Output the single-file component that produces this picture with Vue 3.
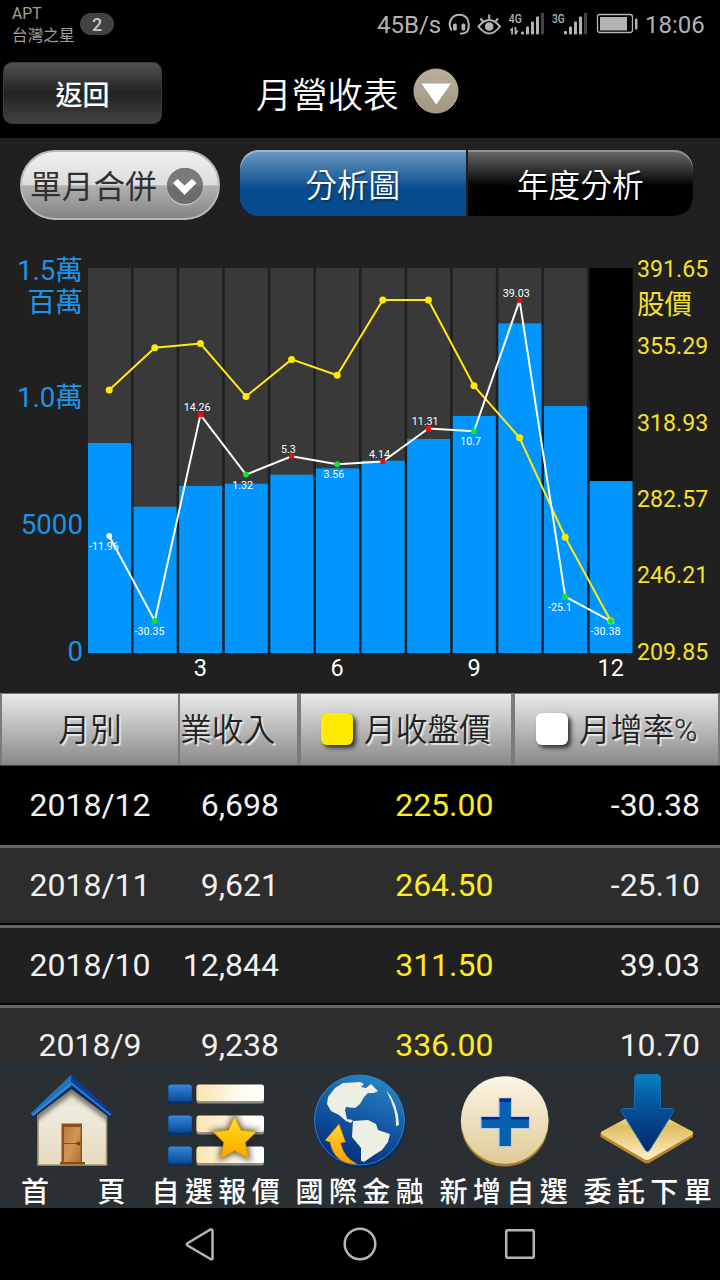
<template>
  <div class="screen">
    <header class="status-bar">
      <div class="carrier">
        <span>APT</span>
        <span>台灣之星</span>
      </div>
      <span class="badge">2</span>
      <span class="speed">45B/s</span>
      <svg class="status-icons" width="194" height="30" viewBox="446 10 194 30">
        <g fill="none" stroke="#b3b3b3" stroke-width="2">
          <path d="M451.500 30.500C449 26 449.500 21 452 18C455.500 13.500 463 13.500 466.800 18C469 21 469.300 27 468 30C467 33 464.500 33.700 460 33.700" />
          <path d="M478.500 26.500Q489.200 13.500 500 26.500Q489.200 40.500 478.500 26.500Z" />
          <path d="M480.500 18.500L483.500 22M489.200 14.500V19M498 18.500L495 22" />
        </g>
        <g fill="#b3b3b3">
          <rect x="453" y="23.500" width="3.800" height="7" rx="1.500" />
          <rect x="461.500" y="23.500" width="3.800" height="7" rx="1.500" />
          <circle cx="489.200" cy="26.500" r="4.300" />
          <path d="M513 27V34.500H511.200V30.500H509.200ZM514.600 27H516.400V30.500H518.400L516.400 34.500H514.600Z" />
          <rect x="521" y="31.500" width="3" height="3" rx="1" />
          <rect x="526" y="26.500" width="3" height="8" rx="1" />
          <rect x="531" y="21.500" width="3" height="13" rx="1" />
          <rect x="536" y="16.500" width="3" height="18" rx="1" />
          <rect x="564" y="31" width="3" height="3.500" rx="1" />
          <rect x="569" y="26.500" width="3" height="8" rx="1" />
          <rect x="574" y="21.500" width="3" height="13" rx="1" />
          <rect x="579" y="16.500" width="3" height="18" rx="1" />
          <rect x="600" y="17" width="27" height="13.500" />
          <rect x="635" y="18.500" width="2.500" height="11" rx="1" />
        </g>
        <rect x="541" y="12.800" width="3" height="21.700" rx="1" fill="#444" />
        <rect x="584" y="12.800" width="3" height="21.700" rx="1" fill="#444" />
        <rect x="597.500" y="14.500" width="35" height="18" rx="2.500" fill="none" stroke="#b3b3b3" stroke-width="1.300" />
        <g class="net">
          <text x="508.800" y="22.800" textLength="13" lengthAdjust="spacingAndGlyphs">4G</text>
          <text x="552" y="22.800" textLength="12.500" lengthAdjust="spacingAndGlyphs">3G</text>
        </g>
      </svg>
      <span class="clock">18:06</span>
    </header>

    <div class="title-bar">
      <button class="back">返回</button>
      <h1>月營收表</h1>
      <svg class="title-arrow" width="46" height="46" viewBox="0 0 46 46">
        <defs>
          <linearGradient id="tan" x1="0" y1="0" x2="0" y2="1">
            <stop offset="0" stop-color="#b9af9d" />
            <stop offset="1" stop-color="#a1967f" />
          </linearGradient>
        </defs>
        <circle cx="23" cy="23" r="22" fill="url(#tan)" stroke="#b5ac9a" stroke-width="1" />
        <path d="M8.500 15.500H38L23.200 36.500Z" fill="#fff" />
      </svg>
    </div>

    <div class="controls">
      <button class="picker">
        <span>單月合併</span>
        <svg width="38" height="40" viewBox="0 0 38 40">
          <circle cx="19" cy="20.300" r="18" fill="#ccc" />
          <circle cx="19" cy="19" r="18" fill="#6c6c6c" />
          <path d="M1 19A18 18 0 0 1 37 19Z" fill="#7a7a7a" />
          <path d="M7 16L11.500 12L18.500 18.500L26 12L30.500 16L18.500 28Z" fill="#fff" />
        </svg>
      </button>
      <div class="tabs">
        <button class="tab active">分析圖</button>
        <button class="tab">年度分析</button>
      </div>
    </div>

    <svg class="chart" width="720" height="473" viewBox="0 220 720 473">
      <g v-for="(m, i) in months" :key="i">
        <rect :x="barX(i)" :y="TOP" width="43" :height="BOTTOM - TOP" :fill="i === 11 ? '#000' : '#393939'" />
        <rect :x="barX(i)" :y="revenueY(m.revenue)" width="43" :height="BOTTOM - revenueY(m.revenue)" fill="#0095ff" />
        <rect v-if="i < 11" :x="barX(i) + 43.600" :y="revenueY(m.revenue)" width="1.400" :height="BOTTOM - revenueY(m.revenue)" fill="#06253c" />
      </g>

      <g class="growth-text">
        <text v-for="(m, i) in months" :key="i" :x="pointX(i) - (m.growth < 0 ? 5.300 : 3.300)" :y="growthY(m.growth) + (m.up ? -3.500 : 14)">{{ m.growth }}</text>
      </g>

      <polyline :points="priceLine" fill="none" stroke="#ffea14" stroke-width="2" />
      <circle v-for="(m, i) in months" :key="'p' + i" :cx="pointX(i)" :cy="priceY(m.price)" r="3.500" fill="#ffea00" />
      <polyline :points="growthLine" fill="none" stroke="#fff" stroke-width="2" />
      <template v-for="(m, i) in months" :key="'g' + i">
        <rect v-if="m.up" :x="pointX(i) - 2.500" :y="growthY(m.growth) - 2.500" width="5" height="5" fill="#e60f0f" />
        <circle v-else :cx="pointX(i)" :cy="growthY(m.growth)" r="2.900" :fill="i === 0 ? '#fff' : '#10e52c'" />
      </template>

      <g class="axis-left">
        <text v-for="t in leftAxis" :key="t.label" x="83" :y="t.y">{{ t.label }}</text>
      </g>
      <g class="axis-right">
        <text v-for="t in rightAxis" :key="t.label" x="637" :y="t.y" :class="{ unit: t.unit }">{{ t.label }}</text>
      </g>
      <g class="axis-bottom">
        <text v-for="n in [3, 6, 9, 12]" :key="n" :x="pointX(n - 1)" y="676">{{ n }}</text>
      </g>
    </svg>

    <div class="thead">
      <div class="th month"><span>月別</span></div>
      <div class="th revenue"><span>業收入</span></div>
      <div class="th price"><i class="swatch yellow" /><span>月收盤價</span></div>
      <div class="th growth"><i class="swatch" /><span>月增率%</span></div>
    </div>
    <div class="rows">
      <div v-for="r in rows" :key="r.month" class="row">
        <span class="month">{{ r.month }}</span>
        <span class="revenue">{{ r.revenue }}</span>
        <span class="price">{{ r.price }}</span>
        <span class="growth">{{ r.growth }}</span>
      </div>
    </div>

    <nav class="bottom-bar">
      <a class="item">
        <svg width="144" height="112" viewBox="0 1063 144 112">
          <defs>
            <linearGradient id="wall" x1="0" y1="0" x2="0" y2="1">
              <stop offset="0" stop-color="#cfc8bb" />
              <stop offset=".3" stop-color="#f0ebe0" />
              <stop offset="1" stop-color="#e6dabd" />
            </linearGradient>
            <linearGradient id="door" x1="0" y1="0" x2="1" y2="1">
              <stop offset="0" stop-color="#bd7c3b" />
              <stop offset=".5" stop-color="#d09655" />
              <stop offset="1" stop-color="#b57227" />
            </linearGradient>
            <filter id="eave" x="-10%" y="-20%" width="120%" height="140%">
              <feGaussianBlur stdDeviation="2" />
            </filter>
            <clipPath id="front">
              <path d="M38 1113L71.500 1084L106.500 1115V1165H38Z" />
            </clipPath>
          </defs>
          <path d="M38 1113L71.500 1084L106.500 1115V1165H38Z" fill="url(#wall)" stroke="#a89a7c" stroke-width="1.500" />
          <g clip-path="url(#front)">
            <path d="M30 1121L71.500 1089L114 1121" fill="none" stroke="#5d564a" stroke-width="8" opacity=".75" filter="url(#eave)" />
          </g>
          <rect x="61.500" y="1123.500" width="20.500" height="39.500" fill="#8e4f1c" />
          <rect x="64" y="1127" width="16.500" height="35" fill="url(#door)" />
          <path d="M64 1143.500H80" stroke="#8e4f1c" />
          <circle cx="78.500" cy="1143.500" r="2" fill="#7d420f" />
          <rect x="60" y="1162" width="25" height="2.500" fill="#8b4b16" />
          <path d="M30.500 1114L33 1118L71.500 1089L110.500 1118L113 1114L71.500 1078Z" fill="#02295f" />
          <path d="M30.500 1113.500L71.500 1074.500V1086L33 1116.500Z" fill="#2472bb" />
          <path d="M113 1113.500L71.500 1074.500V1086L110.500 1116.500Z" fill="#0a3f96" />
          <path d="M33 1115L71.500 1083.500L110.500 1115" fill="none" stroke="#3f8bd4" stroke-width="1.500" />
        </svg>
        <span class="label home">首<b>頁</b></span>
      </a>
      <a class="item">
        <svg width="144" height="112" viewBox="144 1063 144 112">
          <defs>
            <linearGradient id="blue" x1="0" y1="0" x2="0" y2="1">
              <stop offset="0" stop-color="#3488df" />
              <stop offset="1" stop-color="#074a92" />
            </linearGradient>
            <linearGradient id="cream" x1="0" y1="0" x2="1" y2="0">
              <stop offset="0" stop-color="#fae3ad" />
              <stop offset=".65" stop-color="#fffaf0" />
              <stop offset="1" stop-color="#fff" />
            </linearGradient>
            <linearGradient id="star" x1="0" y1="0" x2="0" y2="1">
              <stop offset="0" stop-color="#ffdf3c" />
              <stop offset=".5" stop-color="#fdc403" />
              <stop offset="1" stop-color="#f5a700" />
            </linearGradient>
            <filter id="soft" x="-30%" y="-30%" width="160%" height="160%">
              <feGaussianBlur stdDeviation="3" />
            </filter>
          </defs>
          <g v-for="y in [1084.500, 1115.500, 1146.500]" :key="y">
            <rect x="168.300" :y="y + 1.500" width="23.500" height="18" rx="2.500" fill="#063168" />
            <rect x="168.300" :y="y" width="23.500" height="17" rx="2.500" fill="url(#blue)" />
            <rect x="196.500" :y="y + 2" width="67.500" height="17" rx="2.500" fill="#92908b" />
            <rect x="196.500" :y="y" width="67.500" height="16.500" rx="2.500" fill="url(#cream)" />
          </g>
          <path :d="starPath" fill="#2b1d04" stroke="#2b1d04" stroke-width="4" opacity=".75" filter="url(#soft)" />
          <path :d="starPath" fill="url(#star)" stroke="#e9a500" stroke-width="1" stroke-linejoin="round" />
        </svg>
        <span class="label">自選報價</span>
      </a>
      <a class="item">
        <svg width="144" height="112" viewBox="288 1063 144 112">
          <defs>
            <linearGradient id="sea" x1=".7" y1="0" x2=".3" y2="1">
              <stop offset="0" stop-color="#2588c5" />
              <stop offset=".5" stop-color="#1355a2" />
              <stop offset="1" stop-color="#032a78" />
            </linearGradient>
            <linearGradient id="swoosh" x1="0" y1="0" x2="0" y2="1">
              <stop offset="0" stop-color="#ffd63a" />
              <stop offset="1" stop-color="#ff9e00" />
            </linearGradient>
          </defs>
          <circle cx="360.500" cy="1122" r="45.500" fill="#062a62" />
          <circle cx="359.500" cy="1120" r="45" fill="url(#sea)" stroke="#2b83c3" stroke-width="1" />
          <g fill="#edeee4">
            <path d="M343 1083L360 1082L364 1084L361 1087L366 1088L371 1084L378 1091L374 1093L368 1093L364 1097L360 1104L355 1108L346 1107L345 1110L347 1119L353 1120L351 1123L346 1121L339 1115L331 1111L327 1104L328 1097L335 1088Z" />
            <path d="M353 1121L368 1120L376 1124L378 1130L390 1134L388 1142L382 1150L374 1155L364 1162L361 1161L361 1148L352 1137Z" />
            <path d="M386 1090Q398 1103 399 1125L396 1126Q397 1111 386 1090Z" />
          </g>
          <path d="M339 1124L345.500 1142L340.500 1143Q344 1158 357 1164Q334 1164 330 1142L325 1140.500Z" fill="url(#swoosh)" stroke="#c77b00" stroke-width=".6" />
        </svg>
        <span class="label">國際金融</span>
      </a>
      <a class="item">
        <svg width="144" height="112" viewBox="432 1063 144 112">
          <defs>
            <linearGradient id="coin" x1="0" y1="0" x2="0" y2="1">
              <stop offset="0" stop-color="#fcf5e5" />
              <stop offset="1" stop-color="#dfcb97" />
            </linearGradient>
            <linearGradient id="plus" x1="0" y1="0" x2="0" y2="1">
              <stop offset="0" stop-color="#0a63b4" />
              <stop offset="1" stop-color="#0560ac" />
            </linearGradient>
          </defs>
          <circle cx="504.700" cy="1122.500" r="44" fill="#a67f2c" />
          <circle cx="504.700" cy="1120" r="43.800" fill="url(#coin)" />
          <path d="M499 1098H511.500V1116.500H529.500V1128.500H511.500V1146.500H499V1128.500H481V1116.500H499Z" fill="url(#plus)" stroke="#b9c9e6" stroke-width="1.200" />
          <path d="M499.500 1098.500H511V1102H499.500ZM481.500 1117H499.500V1119.500H481.500ZM511 1117H529V1119.500H511Z" fill="#06278b" />
        </svg>
        <span class="label">新增自選</span>
      </a>
      <a class="item">
        <svg width="144" height="112" viewBox="576 1063 144 112">
          <defs>
            <linearGradient id="plate" x1="0" y1="0" x2="0" y2="1">
              <stop offset="0" stop-color="#fff6df" />
              <stop offset=".35" stop-color="#e0bd62" />
              <stop offset="1" stop-color="#fff0c4" />
            </linearGradient>
            <linearGradient id="down" x1="0" y1="0" x2="0" y2="1">
              <stop offset="0" stop-color="#0682c2" />
              <stop offset=".4" stop-color="#06529c" />
              <stop offset="1" stop-color="#04286e" />
            </linearGradient>
          </defs>
          <path d="M600.500 1132.500V1137L644 1162.500Q647 1164.500 650 1162.500L693 1137V1132.500Z" fill="#b8862b" />
          <path d="M601.500 1131.500L643 1109.500Q647 1107.500 651 1109.500L692.500 1131.500Q694 1133 692.500 1134.500L650 1159Q647 1161 644 1159L601.500 1134.500Q600 1133 601.500 1131.500Z" fill="url(#plate)" />
          <path d="M638 1074.500H657Q660.500 1074.500 660.500 1078V1108.500H671Q675 1108.500 673 1112.500L650 1149.500Q647.500 1153.500 645 1149.500L622 1112.500Q620 1108.500 624 1108.500H634.500V1078Q634.500 1074.500 638 1074.500Z" fill="url(#down)" stroke="#166db2" stroke-width="1" />
        </svg>
        <span class="label">委託下單</span>
      </a>
    </nav>

    <footer class="system-nav">
      <svg width="40" height="40" viewBox="0 0 40 40"><path d="M32.500 6.500V34.500Q32 36 30.500 35L7.500 21.500Q6 20.300 7.500 19.300L30.500 5.500Q32 5 32.500 6.500Z" /></svg>
      <svg width="40" height="40" viewBox="0 0 40 40"><circle cx="20" cy="20" r="15.300" /></svg>
      <svg width="40" height="40" viewBox="0 0 40 40"><rect x="6.200" y="6.200" width="27.600" height="27.600" rx="1.500" /></svg>
    </footer>
  </div>
</template>

<script setup>
import { computed, ref } from 'vue';

const TOP = 268;
const BOTTOM = 653;
const STEP = 45.6;

const months = ref([
  { revenue: 8182, growth: -11.96, price: 334 },
  { revenue: 5699, growth: -30.35, price: 354 },
  { revenue: 6511, growth: 14.26, price: 356, up: true },
  { revenue: 6597, growth: 1.32, price: 331 },
  { revenue: 6947, growth: 5.3, price: 348.5, up: true },
  { revenue: 7194, growth: 3.56, price: 341 },
  { revenue: 7492, growth: 4.14, price: 376.5, up: true },
  { revenue: 8339, growth: 11.31, price: 376.5, up: true },
  { revenue: 9238, growth: 10.7, price: 336 },
  { revenue: 12844, growth: 39.03, price: 311.5, up: true },
  { revenue: 9621, growth: -25.1, price: 264.5 },
  { revenue: 6698, growth: -30.38, price: 225 }
]);

const rows = [
  { month: '2018/12', revenue: '6,698', price: '225.00', growth: '-30.38' },
  { month: '2018/11', revenue: '9,621', price: '264.50', growth: '-25.10' },
  { month: '2018/10', revenue: '12,844', price: '311.50', growth: '39.03' },
  { month: '2018/9', revenue: '9,238', price: '336.00', growth: '10.70' }
];

const leftAxis = [
  { label: '1.5萬', y: 279.5 },
  { label: '百萬', y: 311.5 },
  { label: '1.0萬', y: 406.5 },
  { label: '5000', y: 533.5 },
  { label: '0', y: 661 }
];

const rightAxis = [
  { label: '391.65', y: 277 },
  { label: '股價', y: 314, unit: true },
  { label: '355.29', y: 354 },
  { label: '318.93', y: 430.5 },
  { label: '282.57', y: 507 },
  { label: '246.21', y: 583 },
  { label: '209.85', y: 659.5 }
];

const starPath = 'M234.500 1117L241 1130.500L256 1132L245 1142.500L248.500 1158L234.500 1150.500L221 1158L224 1142.500L213.500 1132L228.500 1130.500Z';

const barX = (i) => 88 + i * STEP;
const pointX = (i) => 109.2 + i * STEP;
const revenueY = (v) => BOTTOM - (v / 15000) * (BOTTOM - TOP);
const priceY = (v) => BOTTOM - (v - 209.85) * 2.1177;
const growthY = (v) => 300.3 + (39.03 - v) * 4.622;

const toPoints = (fn) => months.value.map((m, i) => `${pointX(i)},${fn(m)}`).join(' ');
const priceLine = computed(() => toPoints((m) => priceY(m.price)));
const growthLine = computed(() => toPoints((m) => growthY(m.growth)));
</script>

<style>
body {
  background: #000;
}
</style>

<style scoped>
.screen {
  width: 720px;
  height: 1280px;
  overflow: hidden;
  display: flex;
  flex-direction: column;
  background: #202020;
  font-family: Roboto, "Noto Sans CJK TC", sans-serif;
  color: #f0f0f0;
}

button {
  border: 0;
  padding: 0;
  font-family: inherit;
}

.status-bar {
  height: 50px;
  flex: none;
  display: flex;
  align-items: center;
  background: #000;
  color: #b3b3b3;
}

.carrier {
  width: 68px;
  padding: 0 0 0 12px;
  display: flex;
  flex-direction: column;
  font-size: 15.7px;
  line-height: 22px;
  color: #a0a0a0;
}

.badge {
  width: 34px;
  height: 22px;
  margin-bottom: 2px;
  border-radius: 11px;
  background: #424242;
  color: #c8c8c8;
  font-size: 18px;
  font-weight: 500;
  line-height: 23px;
  text-align: center;
}

.speed {
  margin-left: auto;
  width: 69px;
  font-size: 24px;
}

.status-icons {
  flex: none;
}

.net text {
  font: 500 13px Roboto, sans-serif;
  fill: #b3b3b3;
}

.clock {
  width: 75px;
  margin-left: 5px;
  font-size: 24px;
}

.title-bar {
  height: 88px;
  flex: none;
  display: flex;
  background: #000;
}

.back {
  box-sizing: border-box;
  width: 159px;
  height: 62px;
  margin: 12px 0 0 3px;
  border: 1px solid #3a3a3a;
  border-radius: 9px;
  background: linear-gradient(#525252, #222 50%, #424242);
  color: #fff;
  font-size: 27px;
  font-weight: 500;
}

h1 {
  margin: 0 0 0 94px;
  width: 144px;
  font-size: 35.7px;
  font-weight: 350;
  line-height: 92px;
  color: #fff;
  white-space: nowrap;
}

.title-arrow {
  margin: 18px 0 0 13px;
}

.controls {
  display: flex;
  height: 82px;
  flex: none;
  padding: 12px 27px 0 20px;
  box-sizing: border-box;
  justify-content: space-between;
}

.picker {
  width: 200px;
  height: 70px;
  box-sizing: border-box;
  border: 2px solid #b8b8b8;
  border-radius: 35px;
  padding-left: 8px;
  display: flex;
  align-items: center;
  background: linear-gradient(#f0f0f0, #dcdcdc 50%, #b2b2b2 51%, #848484);
  color: #303030;
  font-size: 31.700px;
  white-space: nowrap;
}

.picker span {
  padding-bottom: 3px;
}

.picker svg {
  margin: 3px 0 0 9.500px;
}

.tabs {
  width: 453px;
  height: 66px;
  display: flex;
  gap: 2px;
}

.tab {
  flex: 1;
  padding-bottom: 1px;
  font-size: 31.700px;
  font-weight: 350;
  color: #fff;
  background: linear-gradient(#6c6c6c, #000 55%);
  box-shadow: inset 0 2px 0 #929292;
  border-radius: 0 19px 19px 0;
  text-shadow: 1px 2px 2px #000;
}

.tab.active {
  background: linear-gradient(#6e9bc5, #064c8c 60%);
  box-shadow: inset 0 2px 0 #9ab5d0;
  border-radius: 19px 0 0 19px;
  text-shadow: 1px 2px 2px #06315d;
}

.chart {
  display: block;
  flex: none;
}

.growth-text {
  font-size: 10.7px;
  fill: #fff;
  text-anchor: middle;
}

.axis-left {
  font-size: 27.7px;
  fill: #1f93e6;
  text-anchor: end;
}

.axis-right {
  font-size: 23.2px;
  fill: #f5e12a;
}

.unit {
  font-size: 27.5px;
}

.axis-bottom {
  font-size: 23.5px;
  fill: #fff;
  text-anchor: middle;
}

.thead {
  height: 73px;
  flex: none;
  box-sizing: border-box;
  display: flex;
  padding-left: 2px;
  border-top: 1px solid #777;
  border-bottom: 1px solid #444;
  background: #7b7b7b;
}

.th {
  display: flex;
  align-items: center;
  box-sizing: border-box;
  background: linear-gradient(#eaeaea, #888);
  color: #222;
  font-size: 31.700px;
  font-weight: 350;
  text-shadow: 2px 2px 1px #e8e8e8;
  white-space: nowrap;
}

.th span {
  padding-bottom: 5px;
}

.th.month {
  width: 176px;
  margin-right: 2px;
  justify-content: center;
}

.th.revenue {
  width: 117px;
  margin-right: 4px;
}

.th.price {
  width: 210px;
  margin-right: 4px;
  padding-left: 20px;
}

.th.growth {
  width: 203px;
  padding-left: 21px;
}

.swatch {
  width: 32px;
  height: 32px;
  margin: 0 11px 2px 0;
  border-radius: 6px;
  background: #fff;
  box-shadow: 3px 3px 4px #333;
}

.swatch.yellow {
  background: #ffea00;
}

.rows {
  height: 297px;
  flex: none;
  overflow: hidden;
}

.row {
  height: 80px;
  box-sizing: border-box;
  display: flex;
  font-size: 32px;
  line-height: 75px;
  background: #2d2d2d;
  border-top: 3px solid #666;
  border-bottom: 2px solid #000;
}

.row:nth-child(odd) {
  background: #202020;
}

.row:first-child {
  height: 79px;
  padding-top: 2px;
  background: #000;
  border-top: 0;
}

.row .month {
  width: 180px;
  text-align: center;
}

.row .revenue {
  width: 99px;
  text-align: right;
}

.row .price {
  width: 214.500px;
  text-align: right;
  color: #ffeb1f;
}

.row .growth {
  width: 206.500px;
  text-align: right;
}

.bottom-bar {
  height: 145px;
  flex: none;
  display: flex;
  background: #2a2f33;
}

.item {
  width: 144px;
  display: flex;
  flex-direction: column;
}

.item svg {
  flex: none;
}

.label {
  padding-left: 7.500px;
  font-size: 28px;
  font-weight: 500;
  line-height: 35px;
  letter-spacing: 5.400px;
  white-space: nowrap;
  color: #fff;
}

.home {
  display: flex;
  justify-content: space-between;
  padding: 0 13px 0 21px;
}

.home b {
  font-weight: inherit;
}

.system-nav {
  height: 72px;
  flex: none;
  display: flex;
  align-items: center;
  justify-content: center;
  gap: 120px;
  background: #000;
}

.system-nav path,
.system-nav circle,
.system-nav rect {
  fill: none;
  stroke: #b5b5b5;
  stroke-width: 2.500;
}
</style>
